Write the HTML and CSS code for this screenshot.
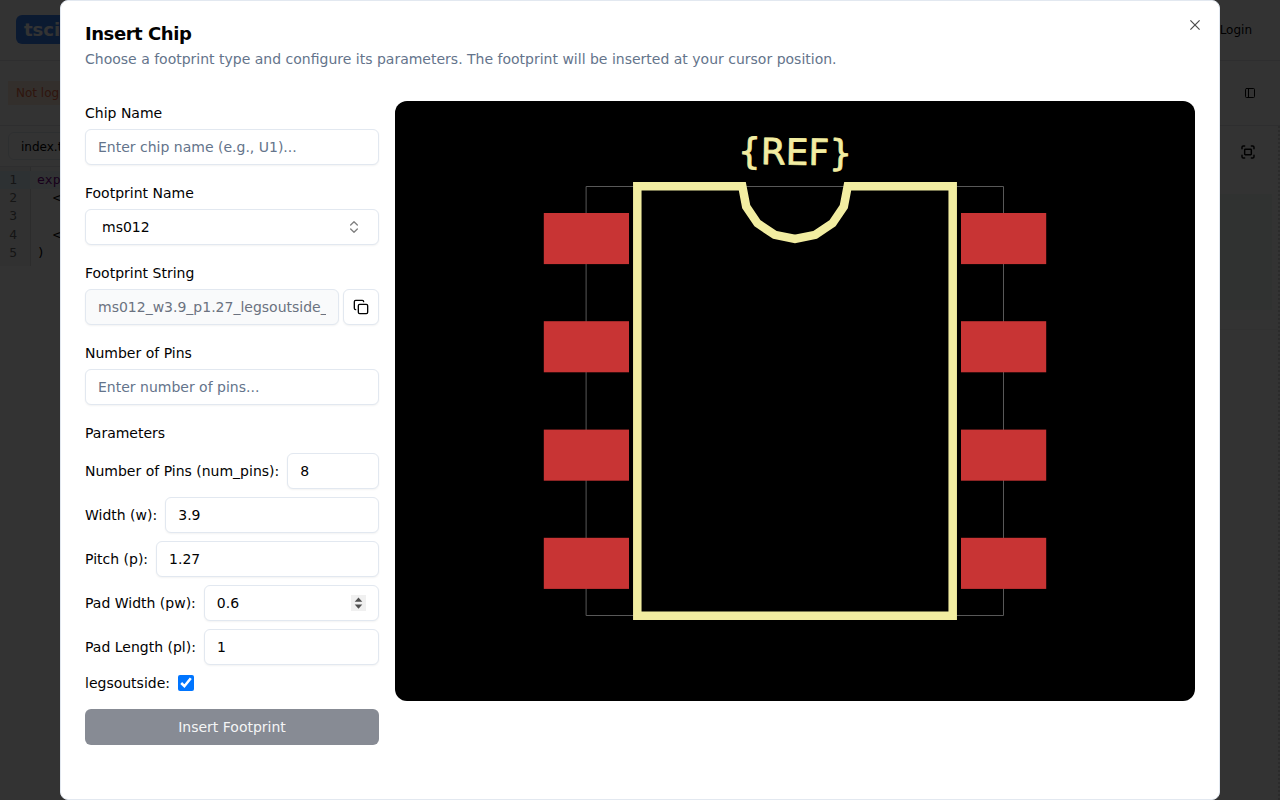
FILE: index.html
```html
<!DOCTYPE html>
<html lang="en">
<head>
<meta charset="utf-8">
<title>Insert Chip</title>
<link rel="stylesheet" href="styles.css">
</head>
<body>
<div class="app">
  <header class="topbar">
    <span class="logo">tsci</span>
    <span class="login">Login</span>
  </header>
  <div class="toolbar">
    <span class="notice">Not log</span>
    <svg class="icon-small" viewBox="0 0 24 24"><rect x="3" y="3" width="18" height="18" rx="2"/><path d="M9 3v18"/></svg>
  </div>
  <div class="workspace">
    <section class="editor">
      <div class="tabs"><span class="file-tab">index.t</span></div>
      <div class="code">
        <div class="line active"><span class="num">1</span><code class="keyword">exp</code></div>
        <div class="line"><span class="num">2</span><code>  &lt;</code></div>
        <div class="line"><span class="num">3</span><code></code></div>
        <div class="line"><span class="num">4</span><code>  &lt;</code></div>
        <div class="line"><span class="num">5</span><code>)</code></div>
      </div>
    </section>
    <section class="preview">
      <div class="preview-tools">
        <svg class="icon-fullscreen" viewBox="0 0 24 24"><path d="M3 7V5a2 2 0 0 1 2-2h2M17 3h2a2 2 0 0 1 2 2v2M21 17v2a2 2 0 0 1-2 2h-2M7 21H5a2 2 0 0 1-2-2v-2"/><rect x="7" y="8" width="10" height="8" rx="1"/></svg>
      </div>
      <div class="preview-card"></div>
      <div class="preview-line"></div>
    </section>
  </div>
</div>
<div class="overlay">
  <main class="dialog">
    <svg class="close" viewBox="0 0 15 15"><path d="M3.2 3.2l8.6 8.6M11.8 3.2l-8.6 8.6"/></svg>
    <h2 class="title">Insert Chip</h2>
    <p class="description">Choose a footprint type and configure its parameters. The footprint will be inserted at your cursor position.</p>
    <div class="body">
      <form class="form">
        <div class="field">
          <label>Chip Name</label>
          <input class="control" type="text" placeholder="Enter chip name (e.g., U1)...">
        </div>
        <div class="field">
          <label>Footprint Name</label>
          <div class="control select">ms012
            <svg class="chevrons" viewBox="0 0 24 24"><path d="m7 15 5 5 5-5M7 9l5-5 5 5"/></svg>
          </div>
        </div>
        <div class="field">
          <label>Footprint String</label>
          <div class="string-row">
            <input class="control readonly" type="text" value="ms012_w3.9_p1.27_legsoutside_" readonly>
            <div class="control copy">
              <svg viewBox="0 0 24 24"><rect x="8" y="8" width="14" height="14" rx="2"/><path d="M4 16c-1.1 0-2-.9-2-2V4c0-1.1.9-2 2-2h10c1.1 0 2 .9 2 2"/></svg>
            </div>
          </div>
        </div>
        <div class="field">
          <label>Number of Pins</label>
          <input class="control" type="text" placeholder="Enter number of pins...">
        </div>
        <div class="params">
          <label class="params-title">Parameters</label>
          <div class="param"><label>Number of Pins (num_pins):</label><input class="control" type="text" value="8"></div>
          <div class="param"><label>Width (w):</label><input class="control" type="text" value="3.9"></div>
          <div class="param"><label>Pitch (p):</label><input class="control" type="text" value="1.27"></div>
          <div class="param"><label>Pad Width (pw):</label>
            <div class="control stepper"><span>0.6</span>
              <svg class="spin" viewBox="0 0 15 16"><path d="M7.5 2.6L11.3 6.8H3.7ZM7.5 13.8L3.7 9.6H11.3Z"/></svg>
            </div>
          </div>
          <div class="param"><label>Pad Length (pl):</label><input class="control" type="text" value="1"></div>
          <div class="param"><label>legsoutside:</label><input class="check" type="checkbox" checked></div>
        </div>
        <button class="submit" type="button">Insert Footprint</button>
      </form>
      <svg class="footprint" viewBox="0 0 800 600">
        <rect class="courtyard" x="191.5" y="85.5" width="417" height="429"/>
        <g class="pads">
          <rect x="148.8" y="112" width="85.2" height="51.1"/>
          <rect x="148.8" y="220.2" width="85.2" height="51.1"/>
          <rect x="148.8" y="328.6" width="85.2" height="51.1"/>
          <rect x="148.8" y="436.8" width="85.2" height="51.1"/>
          <rect x="566" y="112" width="85.2" height="51.1"/>
          <rect x="566" y="220.2" width="85.2" height="51.1"/>
          <rect x="566" y="328.6" width="85.2" height="51.1"/>
          <rect x="566" y="436.8" width="85.2" height="51.1"/>
        </g>
        <path class="silk" d="M347.3 85.2H242.3V514.8H557.7V85.2H452.7L448.8 105.5L437.5 122.3L420.3 133.8L400 137.9L379.7 133.8L362.5 122.3L351.2 105.5Z"/>
        <text class="ref" x="400" y="63.6" transform="rotate(1.1 400 52)">{REF}</text>
      </svg>
    </div>
  </main>
</div>
</body>
</html>
```

FILE: styles.css
```css
* { box-sizing: border-box; }
body {
  margin: 0;
  height: 800px;
  overflow: hidden;
  background: #fff;
  color: #020202;
  font: 14px/20px "DejaVu Sans", sans-serif;
}
svg { fill: none; stroke: currentColor; stroke-width: 2; stroke-linecap: round; stroke-linejoin: round; }

/* Editor page behind the dialog */
.app { height: 800px; display: flex; flex-direction: column; }
.topbar, .toolbar { display: flex; justify-content: space-between; align-items: center; border-bottom: 1px solid #e5e7eb; }
.topbar { height: 61px; padding: 0 28px 2px 16px; }
.logo { width: 60px; height: 29px; padding-left: 8px; border-radius: 6px; background: #3b82f6; color: #fff; font-size: 18px; line-height: 29px; font-weight: 700; }
.login { font-size: 12px; padding-top: 1px; }
.toolbar { height: 65px; padding: 0 24px 0 8px; }
.notice { width: 80px; height: 24px; padding-left: 8px; background: #ffeadb; color: #ea6a45; line-height: 24px; font-size: 12px; }
.icon-small { width: 12px; height: 12px; }
.workspace { flex: 1; display: flex; }
.editor { flex: 1; }
.tabs { height: 41px; padding: 6px 8px; border-bottom: 1px solid #e5e7eb; }
.file-tab { display: block; width: 100px; height: 28px; padding-left: 12px; border: 1px solid #e2e8f0; border-radius: 6px; font-size: 12px; line-height: 28px; }
.code { padding-top: 4px; font: 13px/18.2px "DejaVu Sans Mono", monospace; background: linear-gradient(to right, #f5f5f5 30px, #ddd 30px, #ddd 31px, transparent 31px); width: 640px; height: 99px; }
.line { display: flex; height: 18.2px; }
.num { width: 30px; padding-right: 13px; text-align: right; color: #6c6c6c; }
.line code { flex: 1; padding-left: 7px; font: inherit; white-space: pre; }
.active .num { background: #e2f2ff; }
.active code { background: #f0f8ff; }
.keyword { color: #708; }
.preview { width: 640px; border-right: 2px dotted #d8d8d8; }
.preview-tools { height: 68px; display: flex; justify-content: flex-end; padding: 18px 22px 0 0; }
.icon-fullscreen { width: 16px; height: 16px; stroke-width: 2.2; }
.preview-card { height: 116px; margin-right: 6px; background: #f0f8f4; }
.preview-line { height: 20px; border-bottom: 1px solid #f4f4f4; }

/* Dialog */
.overlay { position: absolute; inset: 0; display: flex; justify-content: center; background: rgba(0, 0, 0, .8); }
.dialog { position: relative; width: 1160px; height: 800px; padding: 24px; border: 1px solid #e2e8f0; border-radius: 8px; background: #fff; }
.close { position: absolute; top: 16px; right: 16px; width: 16px; height: 16px; color: #4d4d4d; stroke-width: 1.15; stroke-linecap: butt; }
.title { margin: 0 0 6px; font-size: 18px; line-height: 18px; font-weight: 700; letter-spacing: -.45px; }
.description { margin: 0 0 32px; color: #64748b; }
.body { display: flex; align-items: flex-start; gap: 16px; }
.form { width: 294px; padding-top: 2px; display: flex; flex-direction: column; gap: 18px; }
.field { display: flex; flex-direction: column; gap: 6px; }
.control { display: block; min-width: 0; width: 100%; height: 36px; padding: 4px 12px; border: 1px solid #e2e8f0; border-radius: 6px; background: #fff; color: #020202; font: inherit; box-shadow: 0 1px 2px rgba(0, 0, 0, .05); }
.control::placeholder { color: #64748b; opacity: 1; }
.select { display: flex; align-items: center; justify-content: space-between; padding: 0 16px; }
.chevrons { width: 16px; height: 16px; color: #808080; }
.string-row { display: flex; gap: 4px; }
.readonly { flex: 1; background: #f9fafb; color: #6b7280; }
.copy { flex: 0 0 36px; display: flex; align-items: center; justify-content: center; padding: 0; }
.copy svg { width: 16px; height: 16px; }
.params { display: flex; flex-direction: column; gap: 8px; }
.params-title { margin-bottom: 2px; }
.param { display: flex; align-items: center; gap: 8px; }
.param label { white-space: nowrap; }
.param .control { flex: 1; }
.stepper { display: flex; align-items: center; justify-content: space-between; }
.spin { width: 15px; height: 16px; background: #f0f0f0; fill: #505050; stroke: none; }
.check { width: 16px; height: 16px; margin: 2px 0; accent-color: #0075ff; }
.submit { height: 36px; margin-top: -2px; border: 0; border-radius: 6px; background: #878b94; color: #f4f5f6; font: inherit; }

/* Footprint drawing */
.footprint { width: 800px; height: 600px; border-radius: 12px; background: #000; }
.courtyard { stroke: #585858; stroke-width: 1; }
.pads { fill: #c83434; stroke: none; }
.silk { stroke: #f2eda1; stroke-width: 8.5; stroke-linejoin: miter; }
.ref { fill: #f2eda1; stroke: #f2eda1; stroke-width: .8; font-size: 36px; text-anchor: middle; }
```
